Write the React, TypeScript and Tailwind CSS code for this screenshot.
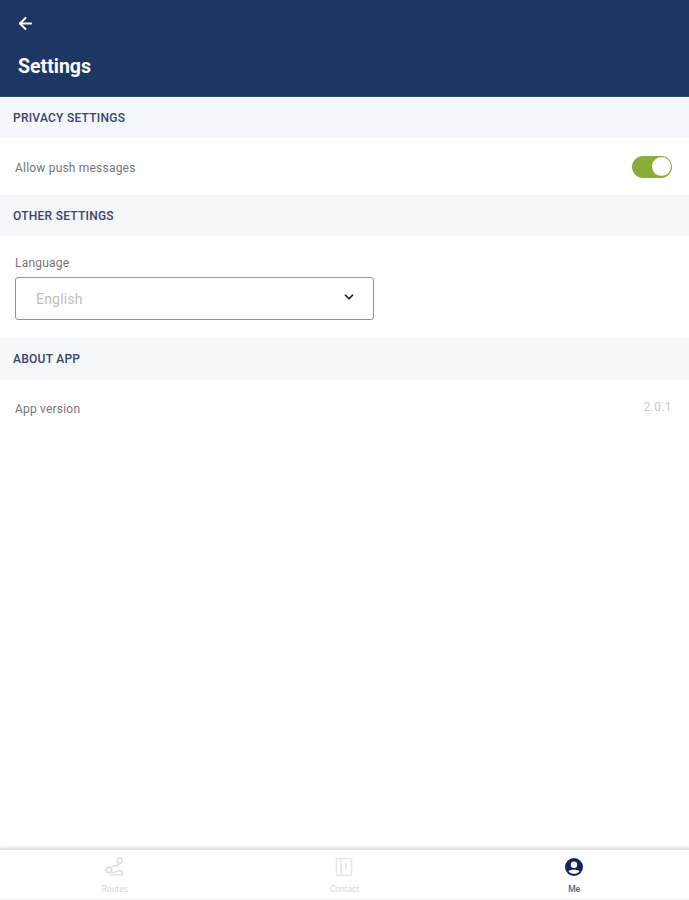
import { ArrowLeft, ChevronDown } from "lucide-react";

const font = { fontFamily: "Roboto, sans-serif" };

function SectionHeader({ children, className }: { children: string; className: string }) {
  return (
    <div className={`flex items-center bg-[#f5f7fb] pl-[13px] text-[12px] font-medium tracking-[0.25px] text-[#36446f] ${className}`}>
      {children}
    </div>
  );
}

function RouteIcon() {
  return (
    <svg width="22" height="22" viewBox="0 0 22 22" fill="none" stroke="#dedede" strokeWidth="1.5">
      <circle cx="15.5" cy="4.5" r="2.6" />
      <path d="M15.5 7.5 C15 11 8 8.5 7 11.5" />
      <circle cx="5" cy="14" r="2.8" />
      <path d="M7 16.5 C10 18 13 14 17 15 C20 16 19 19 17 19 H6" />
    </svg>
  );
}

function ContactIcon() {
  return (
    <svg width="18" height="20" viewBox="0 0 18 20" fill="none" stroke="#e6e6e6" strokeWidth="1.6">
      <rect x="1.5" y="1.5" width="15" height="17" rx="1.5" />
      <path d="M6 1.5 V18.5" />
      <path d="M11 6 V12" strokeWidth="2" />
    </svg>
  );
}

function MeIcon() {
  return (
    <svg width="18" height="18" viewBox="0 0 18 18">
      <circle cx="9" cy="9" r="9" fill="#14235f" />
      <circle cx="9" cy="6.8" r="3.2" fill="#fff" />
      <path d="M3.5 13.2 C4.8 11.2 13.2 11.2 14.5 13.2 C13 15 11 15.8 9 15.8 C7 15.8 5 15 3.5 13.2 Z" fill="#fff" />
    </svg>
  );
}

export default function App() {
  return (
    <div className="flex h-[900px] w-[689px] flex-col bg-white" style={font}>
      <header className="flex h-[97px] shrink-0 flex-col border-b border-[#2c4a78] bg-[#1c3764] pl-[17px] pt-[14px] text-white">
        <ArrowLeft size={19} strokeWidth={2.4} className="-ml-[1px]" />
        <h1 className="ml-[1px] mt-[20px] text-[19.5px] font-bold leading-[28px]">Settings</h1>
      </header>

      <SectionHeader className="h-[41px]">PRIVACY SETTINGS</SectionHeader>
      <div className="flex h-[57px] items-center justify-between pl-[15px] pr-[17px]">
        <span className="mt-[2px] text-[12px] tracking-[0.2px] text-[#767676]">Allow push messages</span>
        <div className="flex h-[22px] w-[40px] items-center justify-end rounded-full bg-[#8aac38] pr-[1px]">
          <div className="h-[19px] w-[19px] rounded-full bg-white" />
        </div>
      </div>

      <SectionHeader className="h-[41px]">OTHER SETTINGS</SectionHeader>
      <div className="flex h-[102px] flex-col pl-[15px] pt-[20px]">
        <span className="text-[12px] leading-[14px] tracking-[0.2px] text-[#767676]">Language</span>
        <div className="mt-[7px] flex h-[43px] w-[359px] items-center justify-between rounded-[3px] border border-[#8c93a8] pl-[20px] pr-[17px]">
          <span className="mt-[2px] text-[14px] tracking-[0.2px] text-[#bdbdbd]">English</span>
          <ChevronDown size={14} strokeWidth={3} className="-mt-[3px] text-[#1a1a1a]" />
        </div>
      </div>

      <SectionHeader className="h-[42px]">ABOUT APP</SectionHeader>
      <div className="flex items-start justify-between pl-[15px] pr-[17px] pt-[20px]">
        <span className="text-[12px] leading-[18px] tracking-[0.2px] text-[#767676]">App version</span>
        <span className="-mt-[2px] text-[12px] leading-[18px] tracking-[0.4px] text-[#c8c8c8]">2.0.1</span>
      </div>

      <div className="flex-1" />

      <nav className="grid h-[52px] shrink-0 grid-cols-3 border-t-2 border-b border-t-[#e2e2e2] border-b-[#ececec] bg-white shadow-[0_-1px_3px_rgba(0,0,0,0.12)]">
        <div className="flex flex-col items-center pt-[6px]">
          <div className="flex h-[22px] items-center"><RouteIcon /></div>
          <span className="mt-[6px] text-[8.5px] leading-[10px] text-[#d8d8d8]">Routes</span>
        </div>
        <div className="flex flex-col items-center pt-[6px]">
          <div className="flex h-[22px] items-center"><ContactIcon /></div>
          <span className="mt-[6px] text-[8.5px] leading-[10px] text-[#d8d8d8]">Contact</span>
        </div>
        <div className="flex flex-col items-center pt-[6px]">
          <div className="flex h-[22px] items-center"><MeIcon /></div>
          <span className="mt-[6px] text-[8.5px] font-medium leading-[10px] text-[#5a6484]">Me</span>
        </div>
      </nav>
    </div>
  );
}
